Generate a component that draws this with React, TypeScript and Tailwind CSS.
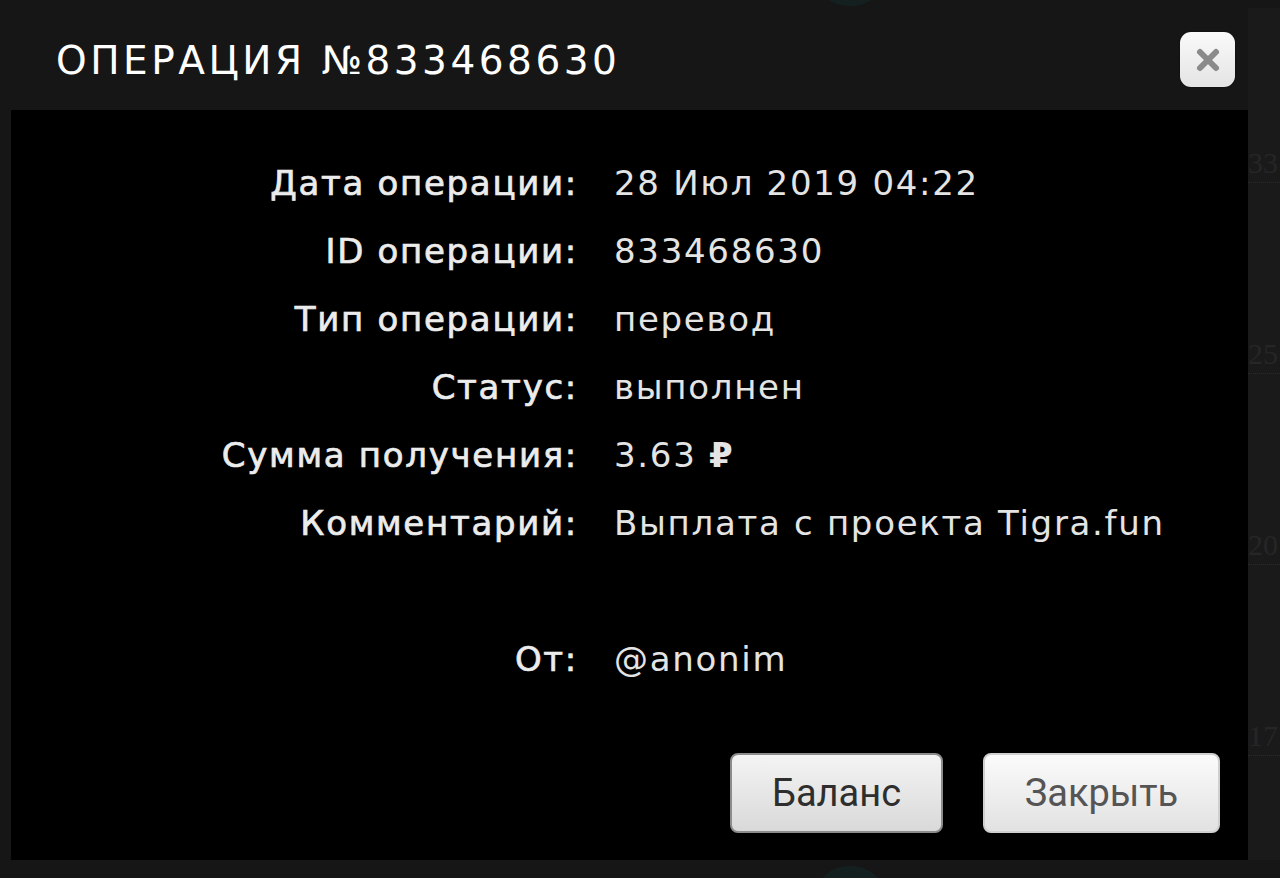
import * as React from 'react';

// One row of the operation details list
const rows: { label: string; value: React.ReactNode }[] = [
  { label: 'Дата операции:', value: '28 Июл 2019 04:22' },
  { label: 'ID операции:', value: '833468630' },
  { label: 'Тип операции:', value: 'перевод' },
  { label: 'Статус:', value: 'выполнен' },
  { label: 'Сумма получения:', value: <>3.63 <span className="font-bold">₽</span></> },
  { label: 'Комментарий:', value: 'Выплата с проекта Tigra.fun' },
  { label: '', value: '' },
  { label: 'От:', value: '@anonim' },
];

const sideNumbers = ['33', '25', '20', '17'];

const CloseIcon = () => (
  <svg width="26" height="26" viewBox="0 0 26 26">
    <path d="M5 5 L21 21 M21 5 L5 21" stroke="#8a8a8a" strokeWidth="6" strokeLinecap="round" />
  </svg>
);

const App: React.FC = () => {
  return (
    <div className="relative w-[1280px] h-[878px] bg-[#161616] flex overflow-hidden">
      <div className="absolute left-[815px] top-[-60px] w-[70px] h-[66px] rounded-full bg-[#14201f]" />
      <div className="absolute left-[815px] top-[866px] w-[70px] h-[66px] rounded-full bg-[#14201f]" />

      <div className="w-[1248px] shrink-0 flex flex-col">
        <header className="h-[110px] flex items-center justify-between pl-[56px] pr-[13px] pt-[11px]">
          <h1
            className="text-white text-[39px] tracking-[0.09em] leading-none"
            style={{ fontFamily: '"DejaVu Sans", sans-serif', fontWeight: 400 }}
          >
            ОПЕРАЦИЯ №833468630
          </h1>
          <button className="w-[55px] h-[55px] mb-[2px] rounded-[11px] bg-gradient-to-b from-[#fafafa] to-[#e4e4e4] flex items-center justify-center shadow-[0_0_2px_rgba(0,0,0,0.6)]">
            <CloseIcon />
          </button>
        </header>

        <main className="ml-[11px] h-[750px] bg-black flex flex-col">
          <div
            className="grid grid-cols-[567px_1fr] gap-x-[36px] pt-[39px] leading-[68px] text-[34px] tracking-[0.05em]"
            style={{ fontFamily: '"DejaVu Sans", sans-serif' }}
          >
            {rows.map((r, i) => (
              <React.Fragment key={i}>
                <div className="text-right text-[#ececec] [-webkit-text-stroke:0.7px_#ececec] h-[68px] whitespace-nowrap">
                  {r.label}
                </div>
                <div className="text-[#e4e4e4] h-[68px] whitespace-nowrap">{r.value}</div>
              </React.Fragment>
            ))}
          </div>

          <div
            className="mt-auto mb-[27px] flex justify-end gap-[40px] pr-[28px]"
            style={{ fontFamily: 'Roboto, sans-serif' }}
          >
            <button className="w-[213px] h-[80px] rounded-[8px] border-2 border-[#8c8c8c] bg-gradient-to-b from-[#f4f4f4] to-[#d9d9d9] text-[#2e2e2e] text-[38px]">
              Баланс
            </button>
            <button className="w-[237px] h-[80px] rounded-[8px] border-2 border-[#cfcfcf] bg-gradient-to-b from-[#fbfbfb] to-[#e2e2e2] text-[#555555] text-[38px]">
              Закрыть
            </button>
          </div>
        </main>
      </div>

      <aside className="flex-1 bg-[#1a1a1a] mt-[8px] mb-[18px] flex flex-col pt-[140px] gap-[156px] overflow-hidden">
        {sideNumbers.map((n) => (
          <div key={n}>
            <div
              className="text-[#262626] text-[30px] leading-none whitespace-nowrap"
              style={{ fontFamily: '"Liberation Serif", serif' }}
            >
              {n}
            </div>
            <div className="mt-[4px] border-b border-dotted border-[#2a2a2a]" />
          </div>
        ))}
      </aside>
    </div>
  );
};

export default App;
